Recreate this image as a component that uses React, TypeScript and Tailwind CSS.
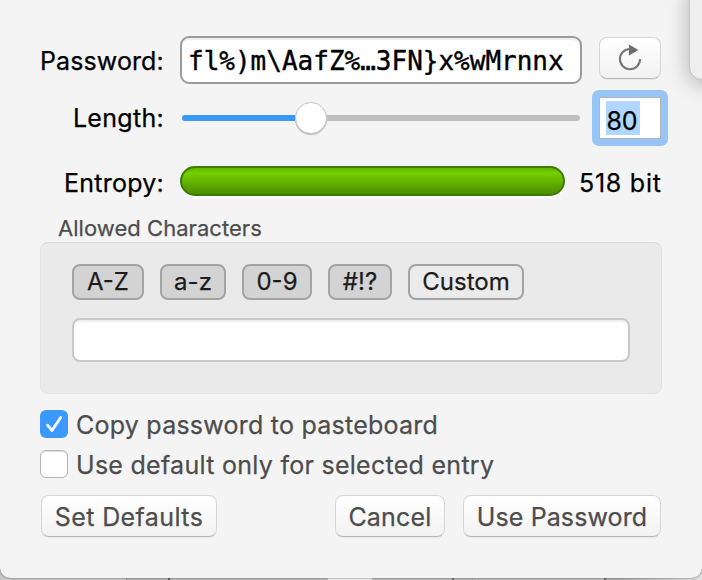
import type { ReactNode } from "react";

const label = "w-[124px] shrink-0 whitespace-nowrap text-right text-[25px] leading-[30px] text-black";
const pushButton =
  "flex h-[42px] items-center justify-center whitespace-nowrap rounded-[8px] border border-[#d6d6d6] border-b-[#b9b9b9] bg-linear-to-b from-white to-[#f2f2f2] pt-[2px] text-[25px] leading-[30px] text-[#4d4d4d] shadow-[0_1px_0_rgba(0,0,0,0.05)]";

function CharSet({ width, on, children }: { width: string; on?: boolean; children: ReactNode }) {
  return (
    <button
      className={`flex h-[36px] items-center justify-center whitespace-nowrap rounded-[8px] border-2 border-[#a3a3a3] text-[24px] leading-[30px] text-[#1c1c1c] ${width} ${on ? "bg-[#d3d3d3]" : "bg-[#ebebeb]"}`}
    >
      {children}
    </button>
  );
}

function ReloadIcon() {
  return (
    <svg width="24" height="28" viewBox="0 0 24 28" className="-mt-[5px] block">
      <path d="M12 6A10.1 10.1 0 1 0 22.1 16.1" fill="none" stroke="#777" strokeWidth="2.1" />
      <path d="M11 1.4v11.2l9.4-5.6z" fill="#6e6e6e" />
    </svg>
  );
}

export default function App() {
  return (
    <div className="relative h-[580px] w-[702px] overflow-hidden bg-[#cfcfcf] font-['Inter','Liberation_Sans',sans-serif] font-normal [-webkit-text-stroke:0.25px_currentColor]">
      {/* strips of the window behind the sheet */}
      <div className="absolute bottom-0 left-0 flex h-[6px] w-full">
        <div className="w-[126px] bg-[#c8c8c8]" />
        <div className="w-[42px] border-l border-[#999] bg-[#b5b5b5]" />
        <div className="w-[160px] rounded-tr-[6px] border-l-2 border-[#666] bg-[#bcbcbc]" />
        <div className="w-[44px] bg-[#f0f0f0]" />
        <div className="w-[80px] bg-[#bdbdbd]" />
        <div className="w-[20px] border-l-2 border-[#777] bg-[#bcbcbc]" />
        <div className="w-[132px] border-l border-[#aaa] bg-[#bebebe]" />
        <div className="flex-1 border-l-2 border-[#777] bg-linear-to-r from-[#aaa] to-[#e2e2e2]" />
      </div>

      <main className="relative h-[578px] overflow-hidden rounded-b-[10px] bg-[#f4f4f4] pl-[40px] pt-[36px] shadow-[0_0_2px_rgba(0,0,0,0.7)]">
        <div className="flex h-[48px] items-start">
          <div className={`${label} pr-px pt-[10px] tracking-[0.1px]`}>Password:</div>
          <div className="ml-[16px] flex h-[48px] w-[402px] items-center overflow-hidden whitespace-nowrap rounded-[9px] border-2 border-[#9b9b9b] bg-white pl-[6px] pt-[2px] font-['DejaVu_Sans_Mono',monospace] text-[26px] font-normal leading-[30px] text-black shadow-[inset_0_2px_1px_#eeeeee] [-webkit-text-stroke:0.4px_black]">
            {"fl%)m\\AafZ%…3FN}x%wMrnnx"}
          </div>
          <button className={`${pushButton} ml-[17px] mt-px w-[62px]`}>
            <ReloadIcon />
          </button>
        </div>

        <div className="mt-[6px] flex h-[56px] items-center">
          <div className={`${label} tracking-[0.3px]`}>Length:</div>
          <div className="ml-[18px] flex w-[398px] shrink-0 items-center">
            <div className="h-[6px] w-[113px] rounded-l-full bg-[#3b99fc]" />
            <div className="h-[32px] w-[32px] shrink-0 rounded-full border border-[#c8c8c8] bg-white shadow-[0_1px_1px_rgba(0,0,0,0.25)]" />
            <div className="h-[6px] flex-1 rounded-r-full bg-[#bfbfbf]" />
          </div>
          <div className="ml-[12px] h-[56px] w-[76px] shrink-0 rounded-[7px] bg-[#98c5f8] p-[7px]">
            <div className="flex h-[42px] items-center border border-[#b5b5b5] bg-white pl-[6px]">
              <span className="flex h-[34px] w-[34px] items-center justify-center bg-[#b2d7ff] pr-[2px] pt-[5px] text-[25px] leading-[30px] text-black">
                80
              </span>
            </div>
          </div>
        </div>

        <div className="mt-[20px] flex h-[30px] items-center">
          <div className={`${label} pt-[4px] tracking-[0.25px]`}>Entropy:</div>
          <div className="ml-[16px] h-[30px] w-[385px] rounded-full border-2 border-[#3c7a00] bg-linear-to-b from-[#64b400] via-[#75d000] via-20% to-[#4c8d00] shadow-[0_2px_0_rgba(255,255,255,0.8)]" />
          <div className="ml-[14px] whitespace-nowrap pt-[4px] text-[25px] leading-[30px] tracking-[0.75px] text-black">518 bit</div>
        </div>

        <div className="mt-[18px] h-[28px] pl-[18px] text-[22px] leading-[28px] tracking-[0.04px] text-[#4d4d4d]">Allowed Characters</div>

        <section className="h-[152px] w-[622px] rounded-[8px] border border-[#e3e3e3] border-t-[#d9d9d9] bg-[#eaeaea] px-[31px] pt-[21px]">
          <div className="flex gap-[16px]">
            <CharSet width="w-[72px]" on>A-Z</CharSet>
            <CharSet width="w-[66px]" on>a-z</CharSet>
            <CharSet width="w-[70px]" on>0-9</CharSet>
            <CharSet width="w-[64px]" on>#!?</CharSet>
            <CharSet width="w-[116px]">Custom</CharSet>
          </div>
          <div className="mt-[18px] h-[44px] w-[558px] rounded-[8px] border-2 border-[#c9c9c9] bg-white shadow-[inset_0_2px_2px_#eeeeee]" />
        </section>

        <div className="mt-[16px] flex h-[28px] items-center">
          <div className="h-[28px] w-[28px] rounded-[6px] bg-[#3b99fc]">
            <svg width="28" height="28" viewBox="0 0 28 28" className="block">
              <path d="M7.5 15.2L12 20.5L20.7 7.5" fill="none" stroke="white" strokeWidth="2.8" strokeLinecap="round" strokeLinejoin="round" />
            </svg>
          </div>
          <div className="ml-[8px] whitespace-nowrap pt-[2px] text-[25px] leading-[30px] tracking-[0.24px] text-[#4d4d4d]">Copy password to pasteboard</div>
        </div>
        <div className="mt-[12px] flex h-[28px] items-center">
          <div className="h-[28px] w-[28px] rounded-[6px] border border-[#b4b4b4] bg-white shadow-[inset_0_1px_1px_#dddddd]" />
          <div className="ml-[8px] whitespace-nowrap pt-[2px] text-[25px] leading-[30px] tracking-[0.28px] text-[#4d4d4d]">Use default only for selected entry</div>
        </div>

        <div className="mt-[17px] flex pl-px">
          <button className={`${pushButton} w-[176px] tracking-[0.4px]`}>Set Defaults</button>
          <button className={`${pushButton} ml-[118px] w-[110px] tracking-[0.2px]`}>Cancel</button>
          <button className={`${pushButton} ml-[18px] w-[198px] tracking-[0.1px]`}>Use Password</button>
        </div>
      </main>

      {/* neighbouring window overlapping the right edge */}
      <div className="absolute -top-[20px] left-[689px] h-[100px] w-[60px] rounded-[13px] border border-[#c4c4c4] bg-[#efefef] shadow-[0_4px_22px_rgba(0,0,0,0.28)]" />
    </div>
  );
}
